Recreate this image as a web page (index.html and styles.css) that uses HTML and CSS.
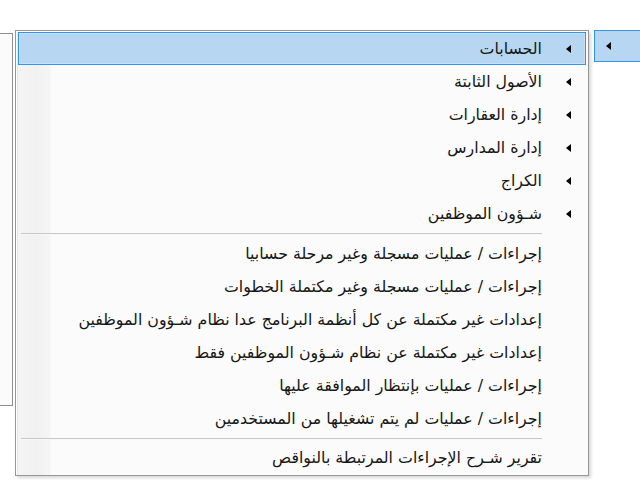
FILE: index.html
```html
<!DOCTYPE html>
<html lang="ar">
<head>
<meta charset="utf-8">
<title>Menu</title>
<link rel="stylesheet" href="styles.css">
</head>
<body>
<div class="panel"></div>
<div class="menu">
  <div class="item selected"><span class="arrow"></span><span class="label">الحسابات</span></div>
  <div class="item"><span class="arrow"></span><span class="label">الأصول الثابتة</span></div>
  <div class="item"><span class="arrow"></span><span class="label">إدارة العقارات</span></div>
  <div class="item"><span class="arrow"></span><span class="label">إدارة المدارس</span></div>
  <div class="item"><span class="arrow"></span><span class="label">الكراج</span></div>
  <div class="item"><span class="arrow"></span><span class="label">شـؤون الموظفين</span></div>
  <div class="sep"></div>
  <div class="item"><span class="noarrow"></span><span class="label">إجراءات / عمليات مسجلة وغير مرحلة حسابيا</span></div>
  <div class="item"><span class="noarrow"></span><span class="label">إجراءات / عمليات مسجلة وغير مكتملة الخطوات</span></div>
  <div class="item"><span class="noarrow"></span><span class="label">إعدادات غير مكتملة عن كل أنظمة البرنامج عدا نظام شـؤون الموظفين</span></div>
  <div class="item"><span class="noarrow"></span><span class="label">إعدادات غير مكتملة عن نظام شـؤون الموظفين فقط</span></div>
  <div class="item"><span class="noarrow"></span><span class="label">إجراءات / عمليات بإنتظار الموافقة عليها</span></div>
  <div class="item"><span class="noarrow"></span><span class="label">إجراءات / عمليات لم يتم تشغيلها من المستخدمين</span></div>
  <div class="sep sep-last"></div>
  <div class="item last"><span class="noarrow"></span><span class="label">تقرير شـرح الإجراءات المرتبطة بالنواقص</span></div>
</div>
<div class="tab"><span class="arrow"></span></div>
</body>
</html>
```

FILE: styles.css
```css
html, body {
  margin: 0;
  padding: 0;
}
body {
  width: 640px;
  height: 480px;
  overflow: hidden;
  background: #ffffff;
  display: flex;
  align-items: flex-start;
  font-family: "DejaVu Sans", sans-serif;
  font-size: 15.8px;
  color: #161616;
}
.panel {
  box-sizing: border-box;
  width: 13px;
  height: 373px;
  margin-top: 33px;
  background: #fbfbfb;
  border: 1px solid #8f8f8f;
  border-left: none;
}
.menu {
  box-sizing: border-box;
  width: 574px;
  margin-left: 2px;
  margin-top: 30px;
  padding: 1px 1px 2px 1px;
  direction: rtl;
  border: 1px solid #979797;
  box-shadow: inset 1px 1px 0 #fefefe, inset 2px 0 0 #e6e6e6, 2px 2px 3px rgba(0,0,0,0.16);
  background:
    linear-gradient(to right, transparent 1px, #f4f4f4 2px, #f1f1f1 20px, #f5f5f5 34px, #fbfbfb 35px) no-repeat left top / 36px 100%,
    #fbfbfb;
}
.item {
  box-sizing: border-box;
  height: 33px;
  margin: 0 1px;
  display: flex;
  align-items: center;
  border: 1px solid transparent;
  padding-right: 13px;
}
.item.last {
  height: 31px;
}
.item.selected {
  background: #b6d6f2;
  border-color: #3394ec;
  box-shadow: inset 0 0 0 1px #c6e0f6;
}
.arrow {
  width: 0;
  height: 0;
  border-top: 4px solid transparent;
  border-bottom: 4px solid transparent;
  border-right: 5px solid #000;
  flex: none;
  margin-right: 1px;
}
.noarrow {
  width: 6px;
  flex: none;
}
.label {
  margin-right: 24px;
  white-space: nowrap;
  line-height: 1;
}
.sep {
  height: 7px;
  margin: 0 45px 0 4px;
  display: flex;
  align-items: center;
}
.sep::before {
  content: "";
  flex: 1;
  height: 1px;
  background: #c8c8c8;
  border-bottom: 1px solid #f8f8f8;
}
.sep-last {
  height: 7px;
}
.tab {
  box-sizing: border-box;
  flex: 1;
  height: 32px;
  margin-left: 5px;
  margin-top: 30px;
  border: 1px solid #3394ec;
  border-right: none;
  background: #b6d6f2;
  display: flex;
  align-items: center;
  padding-left: 11px;
}
```
